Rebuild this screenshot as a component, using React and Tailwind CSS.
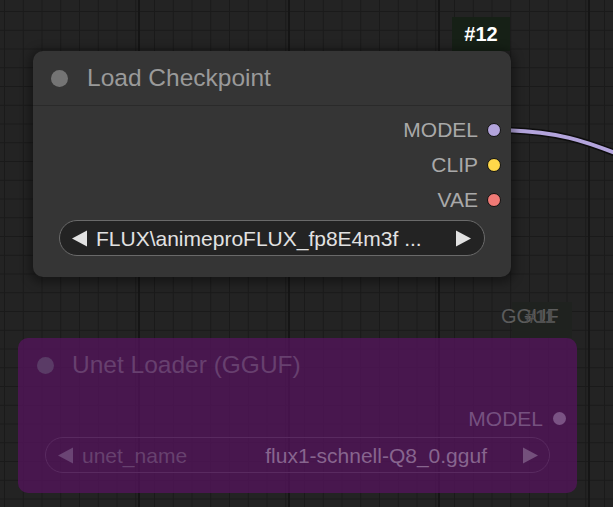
import React from "react";

function TriLeft({ className }) {
  return (
    <svg width="17" height="17" viewBox="0 0 17 17" className={className}>
      <polygon points="16,0.5 16,16.5 1,8.5" fill="currentColor" />
    </svg>
  );
}
function TriRight({ className }) {
  return (
    <svg width="17" height="17" viewBox="0 0 17 17" className={className}>
      <polygon points="1,0.5 1,16.5 16,8.5" fill="currentColor" />
    </svg>
  );
}

function OutRow({ label, dot }) {
  return (
    <div className="flex h-[35px] items-center justify-end gap-[9px] pr-[10px]">
      <span className="text-[21px] leading-none text-[#a9a9a9]">{label}</span>
      <span className={`h-[14px] w-[14px] rounded-full border-[1.5px] border-[#111] ${dot}`} />
    </div>
  );
}

export default function App() {
  return (
    <div
      className="relative h-[507px] w-[613px] overflow-hidden bg-[#232323] font-['Liberation_Sans',Arial,sans-serif] bg-[linear-gradient(to_right,#151515_2px,transparent_2px),linear-gradient(to_right,#1a1a1a_1px,transparent_1px),linear-gradient(to_bottom,#1a1a1a_1px,transparent_1px)] bg-size-[150px_150px,18.75px_18.75px,18.75px_18.75px] bg-position-[138px_0,4px_0,0_11px]"
    >
      {/* link */}
      <svg className="pointer-events-none absolute inset-0" width="613" height="507">
        <path d="M494 130 C 555 130, 585 140, 640 163" stroke="#0d0d0d" strokeWidth="7" fill="none" />
        <path d="M494 130 C 555 130, 585 140, 640 163" stroke="#b3a4dc" strokeWidth="4" fill="none" />
      </svg>

      {/* #12 badge */}
      <div className="absolute left-[452px] top-[17px] flex h-[34px] w-[58px] items-center justify-center bg-[#162016] text-[20px] font-bold text-white">
        #12
      </div>

      {/* Load Checkpoint node */}
      <div className="absolute left-[33px] top-[51px] flex h-[226px] w-[478px] flex-col rounded-[10px] bg-[#353535] shadow-[0_2px_10px_4px_rgba(0,0,0,0.35)]">
        <div className="flex h-[55px] items-center border-b border-[#2a2a2a] pl-[18px]">
          <span className="h-[17px] w-[17px] rounded-full bg-[#747474]" />
          <span className="ml-[19px] text-[24.5px] leading-none text-[#9a9a9a]">Load Checkpoint</span>
        </div>
        <div className="flex flex-col pt-[6px]">
          <OutRow label="MODEL" dot="bg-[#b3a4dc]" />
          <OutRow label="CLIP" dot="bg-[#ffd84a]" />
          <OutRow label="VAE" dot="bg-[#f07a76]" />
          <div className="mx-[26px] mt-[3px] flex h-[36px] items-center rounded-full border-[1.5px] border-[#6a6a6a] bg-[#232323] pl-[11px] pr-[12px] text-[#e2e2e2]">
            <TriLeft />
            <span className="ml-[8px] flex-1 text-[21px] leading-none">FLUX\animeproFLUX_fp8E4m3f ...</span>
            <TriRight />
          </div>
        </div>
      </div>

      {/* GGUF / #11 badge */}
      <div className="absolute left-[512px] top-[302px] h-[36px] w-[60px] bg-[#1f221f]" />
      <div className="absolute left-[501px] top-[305px] text-[20px] leading-[22px] text-[#5c5c5c]">GGUF</div>
      <div className="absolute left-[525px] top-[306px] text-[19px] font-bold leading-[22px] text-[#505050]">#11</div>

      {/* Unet Loader node (bypassed) */}
      <div className="absolute left-[18px] top-[338px] flex h-[155px] w-[559px] flex-col rounded-[10px] bg-[rgba(88,20,96,0.72)]">
        <div className="flex h-[54px] items-center pl-[19px]">
          <span className="h-[17px] w-[17px] rounded-full bg-[#5a3b66]" />
          <span className="ml-[18px] text-[24.5px] leading-none text-[#67406f]">Unet Loader (GGUF)</span>
        </div>
        <div className="flex h-[50px] items-center justify-end gap-[10px] pr-[11px] pt-[2px]">
          <span className="text-[21px] leading-none text-[#765180]">MODEL</span>
          <span className="h-[13px] w-[13px] rounded-full bg-[#7a5384]" />
        </div>
        <div className="mx-[27px] mt-[-5px] flex h-[36px] items-center rounded-full border-[1.5px] border-[#592a60] pl-[11px] pr-[10px]">
          <TriLeft className="text-[#6a4474]" />
          <span className="ml-[8px] text-[21px] leading-none text-[#67416f]">unet_name</span>
          <span className="flex-1 pr-[35px] text-right text-[21px] leading-none text-[#87658e]">flux1-schnell-Q8_0.gguf</span>
          <TriRight className="text-[#74507c]" />
        </div>
      </div>
    </div>
  );
}
